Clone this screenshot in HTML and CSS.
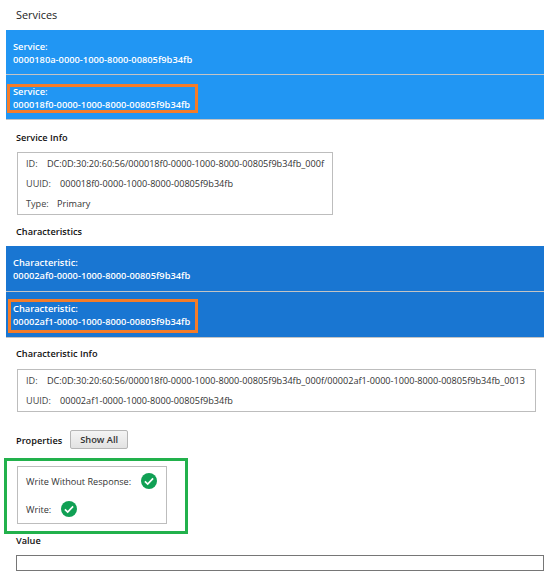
FILE: index.html
```html
<!DOCTYPE html>
<html lang="en">
<head>
<meta charset="utf-8">
<title>Services</title>
<link rel="stylesheet" href="styles.css">
</head>
<body>
<h1 class="title">Services</h1>
<div class="list services">
  <div class="item"><span>Service:</span><span>0000180a-0000-1000-8000-00805f9b34fb</span></div>
  <div class="item"><div class="mark"></div><span>Service:</span><span>000018f0-0000-1000-8000-00805f9b34fb</span></div>
</div>
<h2 class="head head-service">Service Info</h2>
<div class="box box-service">
  <div class="row"><span class="key key-id">ID:</span><span>DC:0D:30:20:60:56/000018f0-0000-1000-8000-00805f9b34fb_000f</span></div>
  <div class="row"><span class="key key-uuid">UUID:</span><span>000018f0-0000-1000-8000-00805f9b34fb</span></div>
  <div class="row"><span class="key key-type">Type:</span><span>Primary</span></div>
</div>
<h2 class="head head-char">Characteristics</h2>
<div class="list chars">
  <div class="item"><span>Characteristic:</span><span>00002af0-0000-1000-8000-00805f9b34fb</span></div>
  <div class="item"><div class="mark"></div><span>Characteristic:</span><span>00002af1-0000-1000-8000-00805f9b34fb</span></div>
</div>
<h2 class="head head-info">Characteristic Info</h2>
<div class="box box-char">
  <div class="row"><span class="key key-id">ID:</span><span>DC:0D:30:20:60:56/000018f0-0000-1000-8000-00805f9b34fb_000f/00002af1-0000-1000-8000-00805f9b34fb_0013</span></div>
  <div class="row"><span class="key key-uuid">UUID:</span><span>00002af1-0000-1000-8000-00805f9b34fb</span></div>
</div>
<div class="props">
  <h2 class="head props-head">Properties</h2>
  <button class="btn" type="button">Show All</button>
</div>
<div class="green">
  <div class="box box-props">
    <div class="prop"><span class="prop-label">Write Without Response:</span>
      <svg class="check" viewBox="0 0 16 16"><circle cx="8" cy="8" r="8" fill="#10a054"/><path d="M3.9 8.3l2.8 2.7 5.4-5.6" fill="none" stroke="#fff" stroke-width="1.7"/></svg></div>
    <div class="prop"><span class="prop-label">Write:</span>
      <svg class="check" viewBox="0 0 16 16"><circle cx="8" cy="8" r="8" fill="#10a054"/><path d="M3.9 8.3l2.8 2.7 5.4-5.6" fill="none" stroke="#fff" stroke-width="1.7"/></svg></div>
  </div>
</div>
<h2 class="head head-value">Value</h2>
<div class="value"></div>
</body>
</html>
```
FILE: styles.css
```css
html, body { margin: 0; padding: 0; }
body {
  width: 544px;
  height: 575px;
  overflow: hidden;
  background: #fff;
  color: #222;
  font-family: "Open Sans", "Noto Sans", sans-serif;
  font-size: 9.15px;
  line-height: 13px;
}
.title { margin: 0; padding: 7px 0 0 16px; height: 30px; box-sizing: border-box; font-size: 10.9px; line-height: 16px; font-weight: 400; color: #222; }
.list { margin-left: 6px; color: #fff; font-size: 9.3px; font-weight: 600; }
.services { background: #2196f3; }
.chars { background: #1976d2; margin-top: 8px; }
.item { position: relative; display: flex; flex-direction: column; justify-content: center; height: 45px; box-sizing: border-box; padding: 1px 7px 0; border-bottom: 1px solid #c4c4c4; }
.chars .item { height: 46px; padding-top: 0; }
.mark { position: absolute; left: 1px; top: 9px; width: 191px; height: 29px; box-sizing: border-box; border: 3px solid #f57c28; }
.chars .mark { left: 2px; top: 7px; width: 190px; height: 34px; }
.head { margin: 0; font-size: 9.2px; line-height: 13px; font-weight: 600; color: #111; padding-left: 16px; }
.head-service { padding-top: 11px; }
.head-char { padding-top: 10px; }
.head-info { padding-top: 9px; }
.box { box-sizing: border-box; border: 1px solid #bdbdbd; margin-left: 17px; padding: 0 8px; display: flex; flex-direction: column; }
.box-service { width: 316px; height: 63px; margin-top: 8px; justify-content: space-around; }
.box-char { width: 519px; height: 43px; margin-top: 9px; justify-content: space-around; }
.row { display: flex; color: #333; white-space: nowrap; }
.row span { flex: none; }
.key { color: #444; }
.row .key-id { width: 21px; }
.row .key-uuid { width: 34px; }
.row .key-type { width: 31px; }
.props { display: flex; align-items: center; gap: 8px; margin-top: 18px; padding-left: 16px; height: 19px; }
.props-head { padding-left: 0; padding-top: 1px; }
.btn { width: 58px; height: 19px; padding: 0; border: 1px solid #b5b5b5; border-radius: 2px; background: linear-gradient(#f4f4f4, #e2e2e2); color: #333; font: 600 9.3px/1 "Open Sans", "Noto Sans", sans-serif; }
.green { box-sizing: border-box; width: 184px; height: 76px; margin: 9px 0 0 4px; border: 3px solid #22b14c; padding: 5px 0 0 10px; }
.box-props { width: 150px; height: 58px; margin: 0; padding: 0 8px; justify-content: space-around; }
.prop { display: flex; align-items: center; gap: 10px; color: #333; white-space: nowrap; }
.check { width: 16px; height: 16px; flex: none; }
.value { box-sizing: border-box; height: 16px; margin: 8px 0 0 16px; border: 1px solid #767676; background: #fff; }
```
